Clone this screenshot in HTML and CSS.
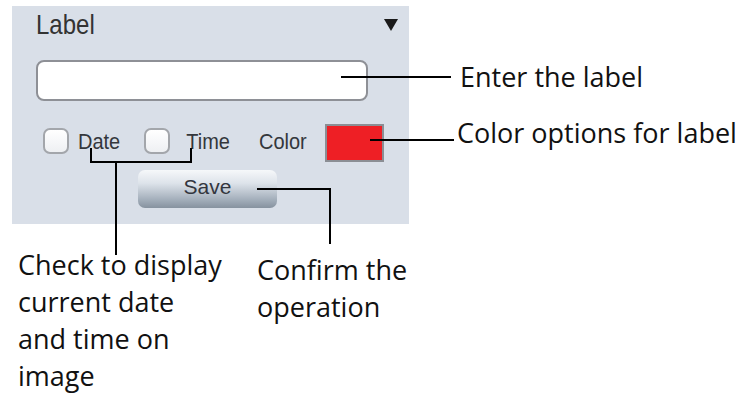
FILE: index.html
```html
<!DOCTYPE html>
<html lang="en">
<head>
<meta charset="utf-8">
<title>Label settings</title>
<link rel="stylesheet" href="styles.css">
</head>
<body>
<div class="figure">
  <div class="panel">
    <div class="panel-head">
      <span class="title">Label</span>
      <span class="caret"></span>
    </div>
    <div class="field"></div>
    <div class="opts">
      <span class="check first"></span>
      <span class="opt-text date">Date</span>
      <span class="check second"></span>
      <span class="opt-text time">Time</span>
      <span class="opt-text color">Color</span>
      <span class="swatch"></span>
    </div>
    <div class="actions">
      <span class="save">Save</span>
    </div>
  </div>
  <div class="callouts">
    <div class="note enter">Enter the label</div>
    <div class="note coloropt">Color options for label</div>
  </div>
  <div class="bottom">
    <div class="note check-note">Check to display<br>current date<br>and time on<br>image</div>
    <div class="note confirm">Confirm the<br>operation</div>
  </div>
  <svg class="lines" width="747" height="397" viewBox="0 0 747 397">
    <g stroke="#000" stroke-width="2" fill="none">
      <path d="M341 77 H451"/>
      <path d="M370 140 H454"/>
      <path d="M91 148 V162 H191 V148"/>
      <path d="M116 162 V255"/>
      <path d="M257 189 H330 V244"/>
    </g>
  </svg>
</div>
</body>
</html>
```
FILE: styles.css
```css
html, body {
  margin: 0;
  padding: 0;
  background: #fff;
}
.figure {
  position: relative;
  width: 747px;
  height: 397px;
  display: grid;
  grid-template-columns: 409px 1fr;
  grid-template-rows: 224px 1fr;
  overflow: hidden;
}
.panel {
  grid-column: 1;
  grid-row: 1;
  margin: 6px 0 0 12px;
  background: #d9dfe8;
  box-sizing: border-box;
  padding: 0 10px 0 24px;
  display: flex;
  flex-direction: column;
  font-family: "Liberation Sans", Arial, sans-serif;
  color: #3b3b3b;
}
.panel-head {
  margin-top: 6px;
  height: 29px;
  display: flex;
  justify-content: space-between;
  align-items: flex-start;
}
.title {
  font-size: 24px;
  line-height: 29px;
  color: #333;
  transform: scaleY(1.12);
  transform-origin: 0 100%;
}
.caret {
  width: 0;
  height: 0;
  margin-top: 7px;
  margin-right: 1px;
  border-left: 7px solid transparent;
  border-right: 7px solid transparent;
  border-top: 12px solid #1a1a1a;
}
.field {
  margin-top: 19px;
  width: 332px;
  height: 41px;
  box-sizing: border-box;
  border: 2px solid #8e9096;
  border-radius: 8px;
  background: #fff;
}
.opts {
  margin-top: 23px;
  height: 38px;
  display: flex;
  align-items: center;
}
.check {
  width: 26px;
  height: 26px;
  box-sizing: border-box;
  border: 2px solid #a3a6ab;
  border-radius: 7px;
  background: linear-gradient(#ffffff, #eef0f3);
  margin-bottom: 4px;
}
.check.first { margin-left: 7px; }
.check.second { margin-left: 24px; }
.opt-text {
  font-size: 20px;
  line-height: 24px;
  margin-bottom: 4px;
  color: #34373c;
  transform: scaleY(1.08);
}
.date { margin-left: 9px; }
.time { margin-left: 16px; }
.color { margin-left: 29px; }
.swatch {
  margin-left: 18px;
  width: 59px;
  height: 38px;
  box-sizing: border-box;
  border: 2px solid #8b8e94;
  background: #ee1f25;
}
.actions {
  margin-top: 8px;
  display: flex;
}
.save {
  margin-left: 102px;
  width: 139px;
  height: 38px;
  box-sizing: border-box;
  border-radius: 7px;
  background: linear-gradient(#f6f8fa 0%, #dde3ea 35%, #a7b2be 75%, #86929f 100%);
  display: flex;
  align-items: center;
  justify-content: center;
  font-size: 21px;
  color: #33363e;
  padding-bottom: 4px;
}
.note {
  font-family: "Open Sans", "Noto Sans", sans-serif;
  font-size: 27px;
  line-height: 30px;
  color: #111;
}
.callouts {
  grid-column: 2;
  grid-row: 1;
  padding-top: 62px;
  padding-left: 51px;
  display: flex;
  flex-direction: column;
  gap: 26px;
}
.coloropt { margin-left: -3px; }
.bottom {
  grid-column: 1 / 3;
  grid-row: 2;
  display: flex;
  align-items: flex-start;
  padding-top: 22px;
}
.check-note {
  margin-left: 18px;
  width: 239px;
  line-height: 37px;
}
.confirm {
  margin-top: 5px;
  line-height: 37px;
}
.lines {
  position: absolute;
  left: 0;
  top: 0;
}
```
